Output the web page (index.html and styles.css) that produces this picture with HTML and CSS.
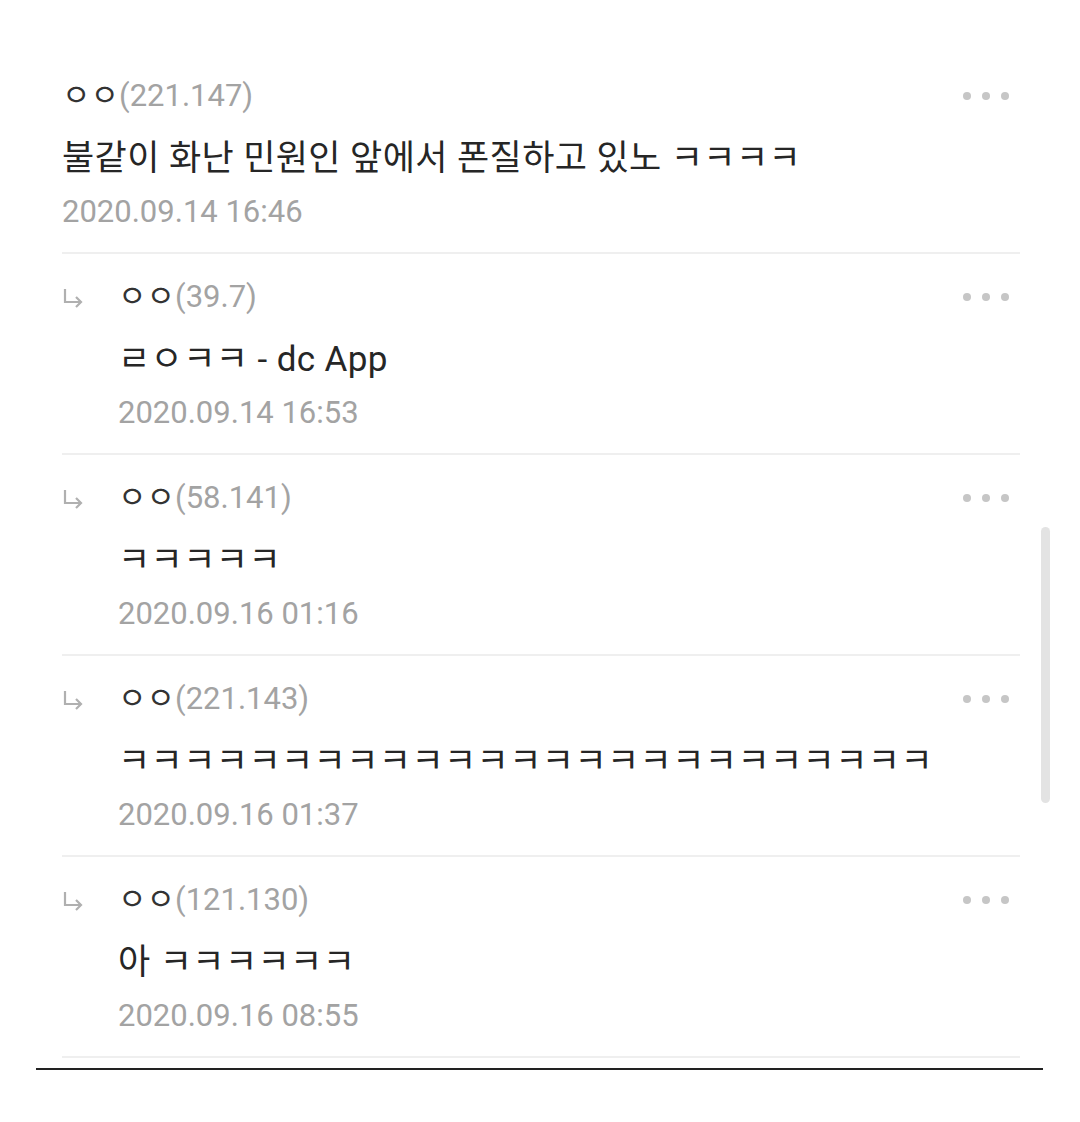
FILE: index.html
```html
<!DOCTYPE html>
<html lang="ko">

<head>
    <meta charset="UTF-8" />
    <meta name="viewport" content="width=device-width, initial-scale=1.0" />
    <title>댓글</title>
    <link rel="stylesheet" href="styles.css">
</head>

<body>
    <div class="page">
        <div class="comments">
            <div class="comment">
                <div class="body">
                    <div class="name">ㅇㅇ<span class="ip">(221.147)</span></div>
                    <div class="text">불같이 화난 민원인 앞에서 폰질하고 있노 ㅋㅋㅋㅋ</div>
                    <div class="date">2020.09.14 16:46</div>
                </div>
                <div class="more"><i></i><i></i><i></i></div>
            </div>

            <div class="comment reply">
                <svg class="arrow" width="22" height="20" viewBox="0 0 22 20">
                    <path d="M3 1 V14 H19 M14 9 L19 14 L14 19" fill="none" stroke="#b0b0b0" stroke-width="2.2" />
                </svg>
                <div class="body">
                    <div class="name">ㅇㅇ<span class="ip">(39.7)</span></div>
                    <div class="text">ㄹㅇㅋㅋ - dc App</div>
                    <div class="date">2020.09.14 16:53</div>
                </div>
                <div class="more"><i></i><i></i><i></i></div>
            </div>

            <div class="comment reply">
                <svg class="arrow" width="22" height="20" viewBox="0 0 22 20">
                    <path d="M3 1 V14 H19 M14 9 L19 14 L14 19" fill="none" stroke="#b0b0b0" stroke-width="2.2" />
                </svg>
                <div class="body">
                    <div class="name">ㅇㅇ<span class="ip">(58.141)</span></div>
                    <div class="text">ㅋㅋㅋㅋㅋ</div>
                    <div class="date">2020.09.16 01:16</div>
                </div>
                <div class="more"><i></i><i></i><i></i></div>
            </div>

            <div class="comment reply">
                <svg class="arrow" width="22" height="20" viewBox="0 0 22 20">
                    <path d="M3 1 V14 H19 M14 9 L19 14 L14 19" fill="none" stroke="#b0b0b0" stroke-width="2.2" />
                </svg>
                <div class="body">
                    <div class="name">ㅇㅇ<span class="ip">(221.143)</span></div>
                    <div class="text">ㅋㅋㅋㅋㅋㅋㅋㅋㅋㅋㅋㅋㅋㅋㅋㅋㅋㅋㅋㅋㅋㅋㅋㅋㅋ</div>
                    <div class="date">2020.09.16 01:37</div>
                </div>
                <div class="more"><i></i><i></i><i></i></div>
            </div>

            <div class="comment reply">
                <svg class="arrow" width="22" height="20" viewBox="0 0 22 20">
                    <path d="M3 1 V14 H19 M14 9 L19 14 L14 19" fill="none" stroke="#b0b0b0" stroke-width="2.2" />
                </svg>
                <div class="body">
                    <div class="name">ㅇㅇ<span class="ip">(121.130)</span></div>
                    <div class="text">아 ㅋㅋㅋㅋㅋㅋ</div>
                    <div class="date">2020.09.16 08:55</div>
                </div>
                <div class="more"><i></i><i></i><i></i></div>
            </div>

            <div class="scrollbar"></div>
        </div>
        <div class="rule"></div>
    </div>
</body>

</html>
```

FILE: styles.css
```css
:root {
    --text: #262626;
    --muted: #a3a3a3;
    --line: #efefef;
}

* {
    box-sizing: border-box;
}

body {
    margin: 0;
    background: white;
    font-family: Roboto, "Noto Sans CJK KR", sans-serif;
    color: var(--text);
}

.page {
    width: 1080px;
    padding-top: 53px;
}

.comments {
    position: relative;
    margin-left: 62px;
    width: 958px;
}

.comment {
    display: flex;
    align-items: flex-start;
    padding: 11px 0 19px;
    height: 201px;
    border-bottom: 2px solid var(--line);
}

.comment.reply .arrow {
    flex: none;
    margin: 23px 34px 0 0;
}

.body {
    flex: 1;
}

.name {
    font-size: 31px;
    line-height: 64px;
    color: #333;
}

.ip {
    color: var(--muted);
}

.text {
    font-size: 35px;
    line-height: 62px;
    letter-spacing: 0.4px;
    color: var(--text);
}

.date {
    font-size: 31px;
    line-height: 44px;
    color: var(--muted);
}

.more {
    display: flex;
    gap: 11px;
    margin: 28px 11px 0 0;
}

.more i {
    width: 8px;
    height: 8px;
    border-radius: 50%;
    background: #c6c6c6;
}

.scrollbar {
    position: absolute;
    left: 979px;
    top: 474px;
    width: 9px;
    height: 276px;
    border-radius: 5px;
    background: #e3e3e3;
}

.rule {
    margin: 10px 0 0 36px;
    width: 1007px;
    height: 2px;
    background: #222;
}
```
